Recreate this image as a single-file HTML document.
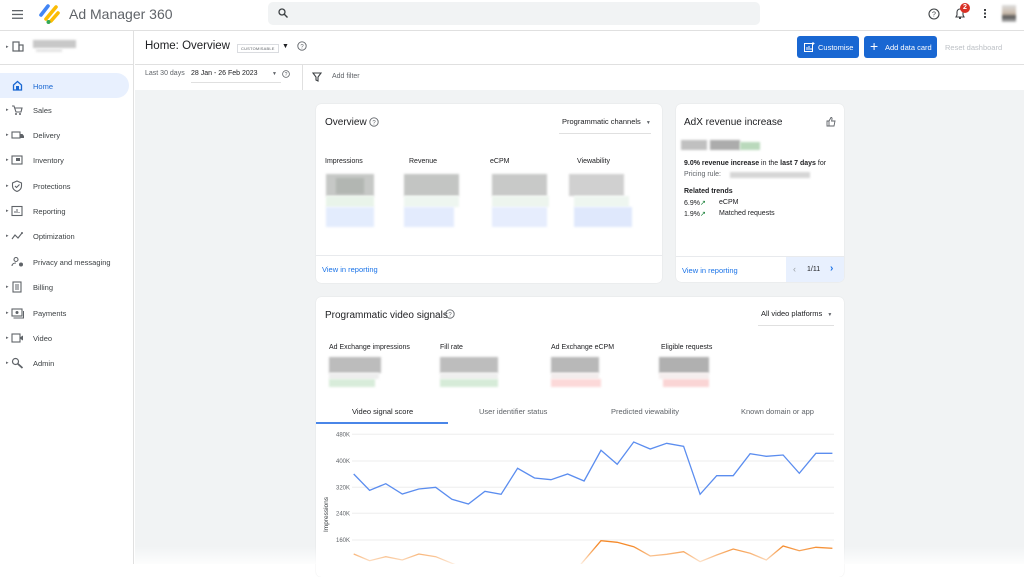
<!DOCTYPE html>
<html><head><meta charset="utf-8">
<style>
*{box-sizing:border-box;margin:0;padding:0}
body{width:1024px;height:564px;overflow:hidden;background:#fff;font-family:"Liberation Sans",Arial,sans-serif;color:#202124;position:relative;font-size:8px}
.abs{position:absolute}
.hdr{left:0;top:0;width:1024px;height:31px;border-bottom:1px solid #e0e0e0;background:#fff}
.search{left:268px;top:2px;width:492px;height:23px;background:#f1f3f4;border-radius:5px}
.side{left:0;top:31px;width:134px;height:533px;border-right:1px solid #e0e0e0;background:#fff}
.nav{position:absolute;left:0;width:130px;height:25px;font-size:7.5px;color:#3c4043}
.nav .t{position:absolute;left:33px;top:8px}
.nav .a{position:absolute;left:6px;top:9px;font-size:5px;color:#5f6368}
.nav svg{position:absolute;left:11px;top:6px}
.gray{left:135px;top:90px;width:889px;height:474px;background:#f1f3f4}
.card{position:absolute;background:#fff;border-radius:5px;box-shadow:0 0 1px rgba(0,0,0,.15)}
.blk{position:absolute;filter:blur(1px)}
.lbl{position:absolute;font-size:7px;color:#202124}
.link{color:#1a73e8;font-size:7.5px}
.btn{position:absolute;top:36px;height:22px;background:#1967d2;color:#fff;border-radius:3px;font-size:7.5px}
</style></head><body>
<div class="abs hdr"></div>
<svg class="abs" style="left:12px;top:10px" width="11" height="9"><rect y="0" width="11" height="1.3" fill="#5f6368"/><rect y="3.8" width="11" height="1.3" fill="#5f6368"/><rect y="7.6" width="11" height="1.3" fill="#5f6368"/></svg>
<svg class="abs" style="left:38px;top:3px" width="24" height="22" viewBox="0 0 24 22">
<line x1="3" y1="12" x2="10" y2="3" stroke="#4285f4" stroke-width="3.6" stroke-linecap="round"/>
<line x1="8" y1="16" x2="18" y2="4" stroke="#fbbc04" stroke-width="3.6" stroke-linecap="round"/>
<line x1="13" y1="18" x2="20" y2="10" stroke="#fbbc04" stroke-width="3.6" stroke-linecap="round"/>
<circle cx="10.5" cy="19" r="2" fill="#34a853"/>
</svg>
<div class="abs" style="left:69px;top:6px;font-size:14px;color:#5f6368">Ad Manager 360</div>
<div class="abs search"></div>
<svg class="abs" style="left:278px;top:8px" width="10" height="10"><circle cx="4" cy="4" r="3" fill="none" stroke="#3c4043" stroke-width="1.3"/><line x1="6.3" y1="6.3" x2="9.5" y2="9.5" stroke="#3c4043" stroke-width="1.4"/></svg>
<svg class="abs" style="left:928px;top:8px" width="12" height="12"><circle cx="6" cy="6" r="5" fill="none" stroke="#3c4043" stroke-width="1.1"/><text x="6" y="8.6" font-size="7" text-anchor="middle" fill="#3c4043" font-family="Liberation Sans">?</text></svg>
<svg class="abs" style="left:954px;top:7px" width="12" height="13"><path d="M2 10h8l-1-2V5a3 3 0 0 0-6 0v3z" fill="none" stroke="#3c4043" stroke-width="1.1"/><rect x="5" y="10.5" width="2" height="1.5" fill="#3c4043"/></svg>
<div class="abs" style="left:960px;top:3px;width:10px;height:10px;border-radius:5px;background:#d93025;color:#fff;font-size:7px;text-align:center;line-height:10px;font-weight:bold">2</div>
<div class="abs" style="left:984px;top:9px;width:2px;height:2px;background:#3c4043;box-shadow:0 3.5px #3c4043,0 7px #3c4043"></div>
<div class="abs" style="left:1002px;top:5px;width:14px;height:17px;background:linear-gradient(#ddd,#c9b9a9 50%,#555 70%,#bbb);filter:blur(1px)"></div>

<div class="abs side"></div>
<div class="abs" style="left:0;top:64px;width:134px;height:1px;background:#e0e0e0"></div>
<div class="abs" style="left:6px;top:44px;font-size:5px;color:#5f6368">▸</div>
<svg class="abs" style="left:12px;top:40px" width="12" height="12"><rect x="1" y="2" width="6" height="9" fill="none" stroke="#5f6368" stroke-width="1.2"/><rect x="7" y="5" width="4" height="6" fill="none" stroke="#5f6368" stroke-width="1.2"/></svg>
<div class="blk" style="left:33px;top:40px;width:43px;height:8px;background:#c8c8c8"></div>
<div class="blk" style="left:36px;top:49px;width:26px;height:3px;background:#e3e3e3"></div>

<div class="abs" style="left:0;top:73px;width:129px;height:25px;background:#e8f0fe;border-radius:0 13px 13px 0"></div>
<svg class="abs" style="left:12px;top:80px" width="11" height="11"><path d="M1.5 5L5.5 1.5 9.5 5V10H1.5Z" fill="none" stroke="#1967d2" stroke-width="1.3"/><rect x="4" y="6" width="3" height="4" fill="#1967d2"/></svg>
<div class="abs" style="left:33px;top:82px;font-size:7.5px;color:#1967d2">Home</div>

<div class="nav" style="top:98px"><span class="a">▸</span><svg width="12" height="12"><path d="M1 2h2l2 6h5l1-4H4" fill="none" stroke="#5f6368" stroke-width="1.1"/><circle cx="5" cy="10" r="1" fill="#5f6368"/><circle cx="9" cy="10" r="1" fill="#5f6368"/></svg><span class="t">Sales</span></div>
<div class="nav" style="top:123px"><span class="a">▸</span><svg width="14" height="12"><rect x="1" y="3" width="8" height="6" fill="none" stroke="#5f6368" stroke-width="1.1"/><path d="M9 5h2.5l1.5 2v2H9" fill="#5f6368"/></svg><span class="t">Delivery</span></div>
<div class="nav" style="top:148px"><span class="a">▸</span><svg width="12" height="12"><rect x="1" y="2" width="10" height="8" fill="none" stroke="#5f6368" stroke-width="1.1"/><rect x="5" y="4" width="4" height="3" fill="#5f6368"/></svg><span class="t">Inventory</span></div>
<div class="nav" style="top:174px"><span class="a">▸</span><svg width="12" height="12"><path d="M6 1L10.5 3V6c0 3-2 4.5-4.5 5.5C3.5 10.5 1.5 9 1.5 6V3Z" fill="none" stroke="#5f6368" stroke-width="1.1"/><path d="M4 6l1.5 1.5L8.5 4.5" fill="none" stroke="#5f6368" stroke-width="1.1"/></svg><span class="t">Protections</span></div>
<div class="nav" style="top:199px"><span class="a">▸</span><svg width="12" height="12"><rect x="1" y="1.5" width="10" height="9" fill="none" stroke="#5f6368" stroke-width="1.1"/><path d="M4 8V6M6 8V4M8 8V7" stroke="#5f6368" stroke-width="1"/></svg><span class="t">Reporting</span></div>
<div class="nav" style="top:224px"><span class="a">▸</span><svg width="14" height="12"><path d="M1 9l3-4 3 3 4-5" fill="none" stroke="#5f6368" stroke-width="1.1"/><circle cx="11" cy="3" r="1" fill="#5f6368"/></svg><span class="t">Optimization</span></div>
<div class="nav" style="top:250px"><svg width="14" height="12"><circle cx="5" cy="3.5" r="2" fill="none" stroke="#5f6368" stroke-width="1.1"/><path d="M1 10c0-2 2-3 4-3" fill="none" stroke="#5f6368" stroke-width="1.1"/><circle cx="10" cy="8.5" r="2" fill="#5f6368"/></svg><span class="t">Privacy and messaging</span></div>
<div class="nav" style="top:275px"><span class="a">▸</span><svg width="12" height="12"><rect x="2" y="1" width="8" height="10" fill="none" stroke="#5f6368" stroke-width="1.1"/><path d="M4 4h4M4 6h4M4 8h4" stroke="#5f6368" stroke-width=".9"/></svg><span class="t">Billing</span></div>
<div class="nav" style="top:301px"><span class="a">▸</span><svg width="13" height="12"><rect x="1" y="2" width="10" height="7" fill="none" stroke="#5f6368" stroke-width="1.1"/><circle cx="6" cy="5.5" r="1.5" fill="#5f6368"/><path d="M2.5 11h10V4" fill="none" stroke="#5f6368" stroke-width="1"/></svg><span class="t">Payments</span></div>
<div class="nav" style="top:326px"><span class="a">▸</span><svg width="13" height="12"><rect x="1" y="2" width="8" height="8" fill="none" stroke="#5f6368" stroke-width="1.1"/><path d="M9.5 5l2.5-1.5v5L9.5 7z" fill="#5f6368"/></svg><span class="t">Video</span></div>
<div class="nav" style="top:351px"><span class="a">▸</span><svg width="13" height="12"><circle cx="4.5" cy="4.5" r="3" fill="none" stroke="#5f6368" stroke-width="1.2"/><line x1="6.5" y1="6.5" x2="11.5" y2="11" stroke="#5f6368" stroke-width="1.8"/></svg><span class="t">Admin</span></div>

<div class="abs" style="left:135px;top:64px;width:889px;height:1px;background:#e0e0e0"></div>
<div class="abs" style="left:145px;top:40px;font-size:11.5px;color:#202124">Home: Overview</div>
<div class="abs" style="left:237px;top:44px;border:1px solid #dadce0;font-size:4px;color:#5f6368;padding:1px 3px;letter-spacing:.2px">CUSTOMISABLE</div>
<div class="abs" style="left:282px;top:43px;font-size:7px;color:#202124">▼</div>
<svg class="abs" style="left:297px;top:41px" width="10" height="10"><circle cx="5" cy="5" r="4.2" fill="none" stroke="#5f6368" stroke-width=".9"/><text x="5" y="7.3" font-size="6" text-anchor="middle" fill="#5f6368" font-family="Liberation Sans">?</text></svg>
<div class="btn" style="left:797px;width:62px"><svg class="abs" style="left:7px;top:6px" width="11" height="10"><rect x=".5" y="1.5" width="8" height="8" fill="none" stroke="#fff" stroke-width="1"/><path d="M3 8V5M5 8V4M7 8V6M9 0v3M7.5 1.5h3" stroke="#fff" stroke-width="1"/></svg><span class="abs" style="left:21px;top:7px">Customise</span></div>
<div class="btn" style="left:864px;width:73px"><span class="abs" style="left:6px;top:2px;font-size:14px;line-height:16px">+</span><span class="abs" style="left:21px;top:7px">Add data card</span></div>
<div class="abs" style="left:945px;top:43px;font-size:7.5px;color:#bdc1c6">Reset dashboard</div>

<div class="abs" style="left:145px;top:70px;font-size:7px;color:#5f6368">Last 30 days</div>
<div class="abs" style="left:191px;top:70px;font-size:7px;color:#202124">28 Jan - 26 Feb 2023</div>
<div class="abs" style="left:191px;top:82px;width:90px;height:1px;background:#e0e0e0"></div>
<div class="abs" style="left:272px;top:71px;font-size:5px;color:#5f6368">▼</div>
<svg class="abs" style="left:282px;top:70px" width="8" height="8"><circle cx="4" cy="4" r="3.4" fill="none" stroke="#5f6368" stroke-width=".8"/><text x="4" y="6" font-size="5" text-anchor="middle" fill="#5f6368" font-family="Liberation Sans">?</text></svg>
<div class="abs" style="left:302px;top:65px;width:1px;height:25px;background:#e0e0e0"></div>
<svg class="abs" style="left:312px;top:72px" width="10" height="10"><path d="M1 1h8L6 5v4L4 8V5z" fill="none" stroke="#3c4043" stroke-width="1.1"/></svg>
<div class="abs" style="left:332px;top:73px;font-size:7px;color:#5f6368">Add filter</div>

<div class="abs gray"></div>

<div class="card" style="left:316px;top:104px;width:346px;height:179px">
 <div class="abs" style="left:9px;top:13px;font-size:10px">Overview</div>
 <svg class="abs" style="left:53px;top:13px" width="10" height="10"><circle cx="5" cy="5" r="4.2" fill="none" stroke="#5f6368" stroke-width=".9"/><text x="5" y="7.3" font-size="6" text-anchor="middle" fill="#5f6368" font-family="Liberation Sans">?</text></svg>
 <div class="abs" style="left:246px;top:13px;font-size:7.5px">Programmatic channels <span style="font-size:5px;color:#5f6368;margin-left:3px">▼</span></div>
 <div class="abs" style="left:243px;top:29px;width:92px;height:1px;background:#e0e0e0"></div>
 <div class="lbl" style="left:9px;top:54px">Impressions</div>
 <div class="lbl" style="left:93px;top:54px">Revenue</div>
 <div class="lbl" style="left:174px;top:54px">eCPM</div>
 <div class="lbl" style="left:261px;top:54px">Viewability</div>
 <div class="blk" style="left:10px;top:70px;width:48px;height:22px;background:#c6c8c6"></div>
 <div class="blk" style="left:20px;top:74px;width:28px;height:16px;background:#b2b6b2"></div>
 <div class="blk" style="left:10px;top:92px;width:48px;height:11px;background:#e9f4ea"></div>
 <div class="blk" style="left:10px;top:103px;width:48px;height:20px;background:#e3ecfd"></div>
 <div class="blk" style="left:88px;top:70px;width:55px;height:22px;background:#c3c5c3"></div>
 <div class="blk" style="left:88px;top:92px;width:55px;height:11px;background:#eef6f0"></div>
 <div class="blk" style="left:88px;top:103px;width:50px;height:20px;background:#e3ebfd"></div>
 <div class="blk" style="left:176px;top:70px;width:55px;height:22px;background:#c8c9c8"></div>
 <div class="blk" style="left:176px;top:92px;width:57px;height:11px;background:#edf5ee"></div>
 <div class="blk" style="left:176px;top:103px;width:55px;height:20px;background:#e6edfd"></div>
 <div class="blk" style="left:253px;top:70px;width:55px;height:22px;background:#d0d0d0"></div>
 <div class="blk" style="left:258px;top:92px;width:55px;height:11px;background:#eef6f0"></div>
 <div class="blk" style="left:258px;top:103px;width:58px;height:20px;background:#dfe8fc"></div>
 <div class="abs" style="left:0;top:151px;width:346px;height:1px;background:#e8eaed"></div>
 <div class="abs link" style="left:6px;top:161px">View in reporting</div>
</div>

<div class="card" style="left:676px;top:104px;width:168px;height:178px;overflow:hidden">
 <div class="abs" style="left:8px;top:13px;font-size:10px">AdX revenue increase</div>
 <svg class="abs" style="left:150px;top:13px" width="10" height="10"><path d="M1 4h2v5H1zM3 4l2-3.5c1 0 1.2.7 1 1.7L5.6 4H9l-1 5H3" fill="none" stroke="#5f6368" stroke-width=".9"/></svg>
 <div class="blk" style="left:5px;top:36px;width:26px;height:10px;background:#c0c0c0"></div>
 <div class="blk" style="left:34px;top:36px;width:30px;height:10px;background:#acacac"></div>
 <div class="blk" style="left:64px;top:38px;width:20px;height:8px;background:#b9d9bb"></div>
 <div class="abs" style="left:8px;top:56px;font-size:7px"><b>9.0% revenue increase</b> in the <b>last 7 days</b> for</div>
 <div class="abs" style="left:8px;top:67px;font-size:7px;color:#5f6368">Pricing rule:</div>
 <div class="blk" style="left:54px;top:68px;width:80px;height:6px;background:#d6d6d6"></div>
 <div class="abs" style="left:8px;top:84px;font-size:7px;font-weight:bold">Related trends</div>
 <div class="abs" style="left:8px;top:95px;font-size:7px">6.9%<span style="color:#188038">↗</span></div>
 <div class="abs" style="left:43px;top:95px;font-size:7px">eCPM</div>
 <div class="abs" style="left:8px;top:106px;font-size:7px">1.9%<span style="color:#188038">↗</span></div>
 <div class="abs" style="left:43px;top:106px;font-size:7px">Matched requests</div>
 <div class="abs" style="left:0;top:152px;width:168px;height:1px;background:#e8eaed"></div>
 <div class="abs" style="left:110px;top:153px;width:58px;height:25px;background:#e8f0fe"></div>
 <div class="abs link" style="left:6px;top:162px">View in reporting</div>
 <div class="abs" style="left:117px;top:160px;font-size:9px;color:#9aa0a6">‹</div>
 <div class="abs" style="left:131px;top:162px;font-size:7px">1/11</div>
 <div class="abs" style="left:154px;top:159px;font-size:10px;color:#1a73e8;font-weight:bold">›</div>
</div>

<div class="card" style="left:316px;top:297px;width:528px;height:280px;overflow:hidden">
 <div class="abs" style="left:9px;top:13px;font-size:10px">Programmatic video signals</div>
 <svg class="abs" style="left:129px;top:12px" width="10" height="10"><circle cx="5" cy="5" r="4.2" fill="none" stroke="#5f6368" stroke-width=".9"/><text x="5" y="7.3" font-size="6" text-anchor="middle" fill="#5f6368" font-family="Liberation Sans">?</text></svg>
 <div class="abs" style="left:445px;top:12px;font-size:7.5px">All video platforms <span style="font-size:5px;color:#5f6368;margin-left:3px">▼</span></div>
 <div class="abs" style="left:442px;top:28px;width:76px;height:1px;background:#e0e0e0"></div>
 <div class="lbl" style="left:13px;top:47px">Ad Exchange impressions</div>
 <div class="lbl" style="left:124px;top:47px">Fill rate</div>
 <div class="lbl" style="left:235px;top:47px">Ad Exchange eCPM</div>
 <div class="lbl" style="left:345px;top:47px">Eligible requests</div>
 <div class="blk" style="left:13px;top:60px;width:52px;height:16px;background:#bcbcbc"></div>
 <div class="blk" style="left:13px;top:76px;width:50px;height:6px;background:#eeeeee"></div>
 <div class="blk" style="left:13px;top:82px;width:46px;height:8px;background:#d8ecda"></div>
 <div class="blk" style="left:124px;top:60px;width:58px;height:16px;background:#bdbdbd"></div>
 <div class="blk" style="left:124px;top:76px;width:58px;height:6px;background:#efefef"></div>
 <div class="blk" style="left:124px;top:82px;width:58px;height:8px;background:#d6ebd8"></div>
 <div class="blk" style="left:235px;top:60px;width:48px;height:16px;background:#b8b8b8"></div>
 <div class="blk" style="left:235px;top:76px;width:48px;height:6px;background:#f3eded"></div>
 <div class="blk" style="left:235px;top:82px;width:50px;height:8px;background:#fcd9d9"></div>
 <div class="blk" style="left:343px;top:60px;width:50px;height:16px;background:#b0b0b0"></div>
 <div class="blk" style="left:343px;top:76px;width:50px;height:6px;background:#f5eeee"></div>
 <div class="blk" style="left:347px;top:82px;width:46px;height:8px;background:#fad5d5"></div>
 <div class="abs" style="left:36px;top:110px;font-size:7.5px">Video signal score</div>
 <div class="abs" style="left:163px;top:110px;font-size:7.5px;color:#5f6368">User identifier status</div>
 <div class="abs" style="left:295px;top:110px;font-size:7.5px;color:#5f6368">Predicted viewability</div>
 <div class="abs" style="left:425px;top:110px;font-size:7.5px;color:#5f6368">Known domain or app</div>
 <div class="abs" style="left:0;top:125px;width:132px;height:2px;background:#4a86e8"></div>
</div>
<svg class="abs" style="left:316px;top:420px" width="528" height="144">
 <g stroke="#eeeeee" stroke-width="1">
  <line x1="36" y1="14.3" x2="518" y2="14.3"/><line x1="36" y1="41" x2="518" y2="41"/><line x1="36" y1="67.3" x2="518" y2="67.3"/><line x1="36" y1="93.3" x2="518" y2="93.3"/><line x1="36" y1="120" x2="518" y2="120"/>
 </g>
 <g font-family="Liberation Sans" font-size="6" fill="#5f6368" text-anchor="end">
  <text x="34" y="16.5">480K</text><text x="34" y="43">400K</text><text x="34" y="69.5">320K</text><text x="34" y="95.5">240K</text><text x="34" y="122">160K</text>
 </g>
 <text x="0" y="0" font-family="Liberation Sans" font-size="6.5" fill="#3c4043" transform="translate(12,112) rotate(-90)">Impressions</text>
 <polyline fill="none" stroke="#5b8def" stroke-width="1.3" points="37.7,54 53.6,70.3 69.8,63.7 86.3,74 102.8,69 119.7,67.3 135.9,79.3 152.4,84 168.9,71.3 185.1,74.3 201.6,48.3 218.5,58 235,59.7 251.6,54 268.1,61 285,30.3 301.2,44.3 317.7,22 334.2,29 350.7,23.3 367.6,26.3 384.1,74.3 400.7,55.7 417.2,55.7 434.1,33.7 450.3,36.3 467.1,35 483.3,53.3 499.9,33.3 516.4,33.3"/>
 <polyline fill="none" stroke="#f58a2a" stroke-width="1.3" points="37.7,134 53.6,140.7 69.8,136.7 86.3,140 102.8,134 119.7,136.7 135.9,143.3 152.4,150 260,150 285,120.7 301.2,122.3 317.7,126.7 334.2,136 350.7,134.3 367.6,131.7 384.1,141.7 400.7,135 417.2,129 434.1,133.3 450.3,140 467.1,126 483.3,130.7 499.9,127.3 516.4,128.3"/>
</svg>
<div class="abs" style="left:135px;top:546px;width:889px;height:18px;background:linear-gradient(rgba(255,255,255,0),rgba(255,255,255,.85))"></div>
</body></html>
